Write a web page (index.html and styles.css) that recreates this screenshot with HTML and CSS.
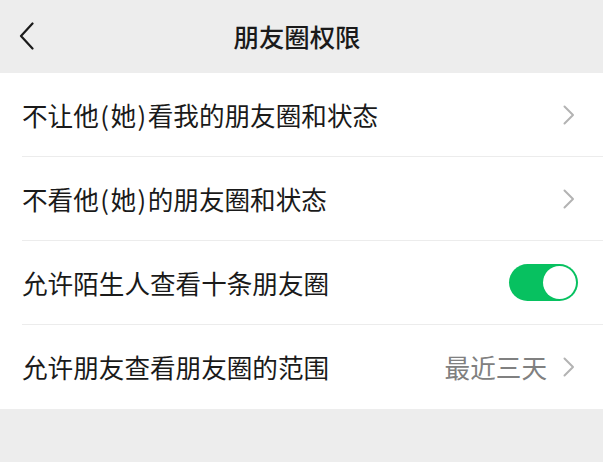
FILE: index.html
```html
<!DOCTYPE html>
<html lang="zh-CN">
<head>
<meta charset="utf-8">
<title>朋友圈权限</title>
<link rel="stylesheet" href="styles.css">
</head>
<body>
<div class="page">
  <header class="nav">
    <span class="back">
      <svg width="16" height="28" viewBox="0 0 16 28"><polyline points="13.5,1.5 2,14 13.5,26.5" fill="none" stroke="#1a1a1a" stroke-width="2.2" stroke-linecap="round" stroke-linejoin="round"/></svg>
    </span>
    <h1 class="title">朋友圈权限</h1>
  </header>
  <ul class="list">
    <li class="row">
      <span class="label">不让他<span class="paren">(</span>她<span class="paren">)</span>看我的朋友圈和状态</span>
      <span class="arrow"><svg width="12" height="20" viewBox="0 0 12 20"><polyline points="1.5,1.5 10,10 1.5,18.5" fill="none" stroke="#b3b3b3" stroke-width="2" stroke-linecap="round" stroke-linejoin="round"/></svg></span>
    </li>
    <li class="row">
      <span class="label">不看他<span class="paren">(</span>她<span class="paren">)</span>的朋友圈和状态</span>
      <span class="arrow"><svg width="12" height="20" viewBox="0 0 12 20"><polyline points="1.5,1.5 10,10 1.5,18.5" fill="none" stroke="#b3b3b3" stroke-width="2" stroke-linecap="round" stroke-linejoin="round"/></svg></span>
    </li>
    <li class="row row-switch">
      <span class="label">允许陌生人查看十条朋友圈</span>
      <span class="switch"><span class="knob"></span></span>
    </li>
    <li class="row">
      <span class="label">允许朋友查看朋友圈的范围</span>
      <span class="value">最近三天</span>
      <span class="arrow"><svg width="12" height="20" viewBox="0 0 12 20"><polyline points="1.5,1.5 10,10 1.5,18.5" fill="none" stroke="#b3b3b3" stroke-width="2" stroke-linecap="round" stroke-linejoin="round"/></svg></span>
    </li>
  </ul>
</div>
</body>
</html>
```

FILE: styles.css
```css
* { box-sizing: border-box; }
html, body {
  margin: 0;
  padding: 0;
  background: #ededed;
  font-family: "Noto Sans CJK SC", "Noto Sans", sans-serif;
  color: #1a1a1a;
}
.page {
  width: 603px;
  height: 462px;
  overflow: hidden;
  background: #ededed;
}
.nav {
  height: 73px;
  display: flex;
  align-items: center;
  justify-content: center;
  padding-right: 9px;
  position: relative;
}
.back {
  position: absolute;
  left: 19px;
  top: 22px;
  display: flex;
}
.title {
  margin: 0;
  font-size: 25.4px;
  font-weight: 500;
  line-height: 1;
  color: #1a1a1a;
}
.list {
  list-style: none;
  margin: 0;
  padding: 0 0 0 22px;
  background: #fff;
}
.row {
  height: 84px;
  display: flex;
  align-items: center;
  padding-right: 28px;
  border-bottom: 1px solid #ececec;
}
.row:last-child { border-bottom: none; }
.label {
  flex: 1;
  font-size: 25.6px;
  line-height: 1;
  color: #1a1a1a;
}
.paren {
  display: inline-block;
  padding: 0 1.5px;
}
.value {
  font-size: 25.6px;
  line-height: 1;
  color: #808080;
  margin-right: 16px;
}
.arrow { display: flex; }
.row-switch { padding-right: 25px; }
.switch {
  width: 69px;
  height: 37px;
  border-radius: 19px;
  background: #07c160;
  display: flex;
  align-items: center;
  justify-content: flex-end;
  padding-right: 2px;
}
.knob {
  width: 33px;
  height: 33px;
  border-radius: 50%;
  background: #fff;
}
```
